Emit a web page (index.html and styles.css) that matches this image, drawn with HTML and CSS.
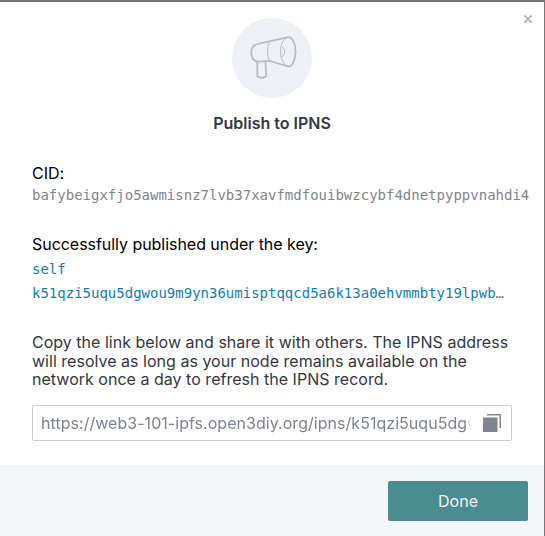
FILE: index.html
```html
<!DOCTYPE html>
<html lang="en">
<head>
<meta charset="utf-8">
<title>Publish to IPNS</title>
<link rel="stylesheet" href="styles.css">
</head>
<body>
<section class="modal">
  <button class="close" aria-label="Close"><svg width="10" height="10" viewBox="0 0 10 10"><path d="M1.3 1.3l7.4 7.4M8.7 1.3L1.3 8.7"/></svg></button>
  <div class="content">
    <div class="badge">
      <svg width="80" height="80" viewBox="0.7 1.2 80 80">
        <g class="horn">
          <path d="M28 26.800L56 20.600M27 44.800Q20 44.200 20 35.500Q20 27.800 28 26.800M27 44.800L38.500 44.200L56.500 49.500"/>
          <path d="M56 20.600C60.500 19.200 64.300 26 64.300 34.500C64.300 43.500 60.500 50.800 56.500 49.500"/>
          <path d="M26 45L26 59.500Q30.500 62.500 35 59.500L34.200 45"/>
        </g>
        <path class="thin" d="M56 20.600C46.500 25 47 45 56.500 49.500M38.500 24.500C35.300 30 35.700 40 38.500 44.200M50 30C54.500 31 54.500 39 50 40"/>
      </svg>
    </div>
    <h1 class="title">Publish to IPNS</h1>
    <p class="label">CID:</p>
    <p class="mono cid">bafybeigxfjo5awmisnz7lvb37xavfmdfouibwzcybf4dnetpyppvnahdi4</p>
    <p class="label published">Successfully published under the key:</p>
    <a class="mono key">self</a>
    <div class="mono key-row"><a>k51qzi5uqu5dgwou9m9yn36umisptqqcd5a6k13a0ehvmmbty19lpwb</a>…</div>
    <p class="description">Copy the link below and share it with others. The IPNS address will resolve as long as your node remains available on the network once a day to refresh the IPNS record.</p>
    <div class="field">
      <span class="url">https://web3-101-ipfs.open3diy.org/ipns/k51qzi5uqu5dgw</span>
      <svg class="copy" width="18" height="18" viewBox="0 0 18 18"><path d="M0 3.500h14.500V18H0zM4 0h13q1 0 1 1v13h-1.500V1.500H4z"/></svg>
    </div>
  </div>
  <footer class="footer"><button class="done">Done</button></footer>
</section>
</body>
</html>
```
FILE: styles.css
```css
* { box-sizing: border-box; }
body {
  margin: 0;
  height: 536px;
  padding: 2px 1px 0 0;
  overflow: hidden;
  background: #777;
  font-family: Inter, sans-serif;
  font-size: 16px;
}
p, h1 { margin: 0; }
button { border: 0; padding: 0; font: inherit; }
.modal {
  position: relative;
  display: flex;
  flex-direction: column;
  height: 534px;
  background: #fff;
}
.close {
  position: absolute;
  top: 12px;
  right: 11px;
  width: 10px;
  height: 10px;
  background: none;
}
.close svg { display: block; stroke: #b7bbc8; stroke-width: 2; }
.content { height: 463px; padding: 16px 32px 0; }
.badge {
  width: 80px;
  height: 80px;
  margin: 0 auto;
  border-radius: 50%;
  background: #edf0f4;
}
.badge svg { display: block; fill: none; stroke: #b7bbc8; stroke-linejoin: round; }
.horn { stroke-width: 1.8; }
.thin { stroke-width: 1; }
.title {
  margin-top: 16px;
  color: #34373f;
  font-size: 16px;
  line-height: 18px;
  font-weight: 600;
  text-align: center;
}
.label { margin-top: 29px; line-height: 24px; color: #000; letter-spacing: -0.04px; }
.mono {
  font-family: "DejaVu Sans Mono", monospace;
  font-size: 14px;
  color: #7f8491;
  white-space: nowrap;
}
.cid { line-height: 20px; }
.published { margin-top: 27px; }
.key { display: block; margin-top: 1px; line-height: 24px; }
.key, .key-row a { color: #117eb3; }
.key-row { line-height: 24px; }
.description {
  margin-top: 28.4px;
  color: #34373f;
  line-height: 18.4px;
  letter-spacing: 0.02px;
}
.field {
  display: flex;
  align-items: center;
  justify-content: space-between;
  width: 480px;
  height: 36px;
  margin-top: 16.4px;
  padding: 0 10px 0 8px;
  border: 1px solid #ccc;
  border-radius: 2px;
}
.url {
  width: 430px;
  overflow: hidden;
  white-space: nowrap;
  color: #7f8491;
  line-height: 24px;
  letter-spacing: 0.04px;
  -webkit-mask-image: linear-gradient(to right, #000 424px, transparent 430px);
  mask-image: linear-gradient(to right, #000 424px, transparent 430px);
}
.copy { fill: #7f8491; }
.footer {
  display: flex;
  flex: 1;
  align-items: flex-start;
  justify-content: flex-end;
  padding: 16px 16px 0;
  background: #f4f6f8;
}
.done {
  width: 140px;
  height: 40px;
  border-radius: 2px;
  background: #4a8c8f;
  color: #f4f6f8;
}
```
